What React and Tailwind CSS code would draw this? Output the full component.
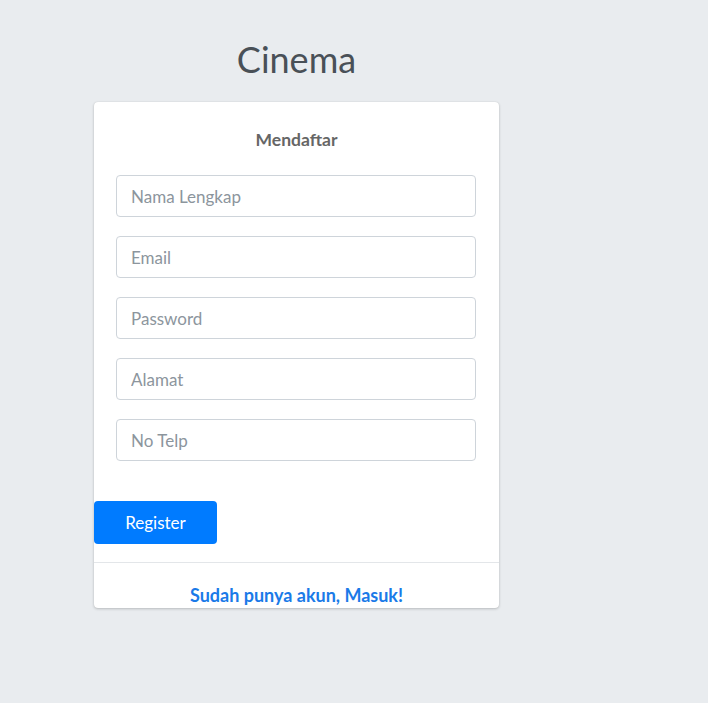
export default function App() {
  const fields = ["Nama Lengkap", "Email", "Password", "Alamat", "No Telp"];
  return (
    <div
      className="min-h-[703px] w-full bg-[#e9ecef]"
      style={{ fontFamily: "Lato, 'Open Sans', sans-serif" }}
    >
      <div className="flex w-[405px] flex-col pl-[94px] box-content pt-[34px]">
        <div className="flex h-[50px] items-center justify-center text-[36px] font-normal leading-none text-[#495057]">
          Cinema
        </div>
        <div className="mt-[18px] flex flex-col rounded-[4px] bg-white shadow-[0_0_1px_rgba(0,0,0,0.125),0_1px_3px_rgba(0,0,0,0.2)]">
          <div className="flex h-[73px] items-center justify-center pt-[3px] text-[17.5px] font-bold text-[#666666]">
            Mendaftar
          </div>
          <div className="flex flex-col gap-[19px] pl-[22px] pr-[23px]">
            {fields.map((f) => (
              <input
                key={f}
                placeholder={f}
                type={f === "Password" ? "password" : "text"}
                className="h-[42px] w-full rounded-[4px] border border-[#ced4da] bg-white px-[14px] text-[17px] text-[#495057] outline-none placeholder:text-[#8c959d]"
              />
            ))}
          </div>
          <div className="mt-[40px] flex">
            <button className="h-[43px] w-[123px] rounded-[4px] bg-[#007bff] text-[17px] text-white">
              Register
            </button>
          </div>
          <div className="mt-[18px] border-t border-[#e3e6e9]" />
          <div className="h-[45px] pt-[22px] text-center text-[18px] font-bold leading-[20px] text-[#1a7ae8]">
            Sudah punya akun, Masuk!
          </div>
        </div>
      </div>
    </div>
  );
}
